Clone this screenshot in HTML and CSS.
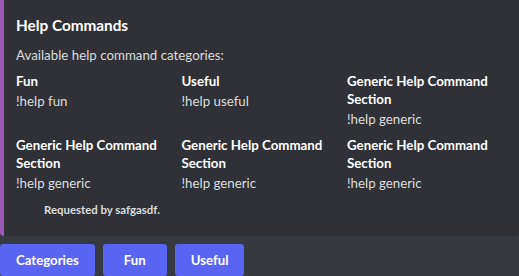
FILE: index.html
```html
<!DOCTYPE html>
<html lang="en">
<head>
<meta charset="utf-8">
<title>Help Commands</title>
<link rel="stylesheet" href="styles.css">
</head>
<body>
<div class="embed">
  <div class="embed-title">Help Commands</div>
  <div class="embed-desc">Available help command categories:</div>
  <div class="fields">
    <div class="field"><div class="field-name">Fun</div><div class="field-value">!help fun</div></div>
    <div class="field"><div class="field-name">Useful</div><div class="field-value">!help useful</div></div>
    <div class="field"><div class="field-name">Generic Help Command Section</div><div class="field-value">!help generic</div></div>
    <div class="field"><div class="field-name">Generic Help Command Section</div><div class="field-value">!help generic</div></div>
    <div class="field"><div class="field-name">Generic Help Command Section</div><div class="field-value">!help generic</div></div>
    <div class="field"><div class="field-name">Generic Help Command Section</div><div class="field-value">!help generic</div></div>
  </div>
  <div class="footer"><span class="footer-icon"></span><span class="footer-text">Requested by safgasdf.</span></div>
</div>
<div class="buttons">
  <button class="btn">Categories</button>
  <button class="btn">Fun</button>
  <button class="btn">Useful</button>
</div>
</body>
</html>
```

FILE: styles.css
```css
html, body {
  margin: 0;
  padding: 0;
  background: #36393f;
  font-family: Lato, "Noto Sans", sans-serif;
  color: #dcddde;
}
.embed {
  background: #2f3136;
  border-left: 4px solid #9b59b6;
  border-radius: 0 0 4px 4px;
  padding: 14px 16px 16px 12px;
}
.embed-title {
  font-size: 15.3px;
  line-height: 22px;
  font-weight: 700;
  color: #ffffff;
}
.embed-desc {
  margin-top: 10px;
  font-size: 13.3px;
  line-height: 18px;
}
.fields {
  margin-top: 8px;
  display: grid;
  grid-template-columns: repeat(3, 157.5px);
  column-gap: 8px;
  row-gap: 8px;
}
.field-name {
  font-size: 13.3px;
  line-height: 18px;
  font-weight: 700;
  color: #ffffff;
  margin-bottom: 2px;
}
.field-value {
  font-size: 13.3px;
  line-height: 18px;
}
.footer {
  margin-top: 8px;
  display: flex;
  align-items: center;
  height: 20px;
}
.footer-icon {
  width: 20px;
  height: 20px;
  margin-right: 8px;
}
.footer-text {
  font-size: 11.4px;
  line-height: 16px;
  font-weight: 700;
  color: #dcddde;
}
.buttons {
  display: flex;
  gap: 8px;
  margin-top: 8px;
}
.btn {
  height: 32px;
  min-width: 64px;
  padding: 2px 16px;
  border: none;
  border-radius: 3px;
  background: #5865f2;
  color: #ffffff;
  font-family: Lato, "Noto Sans", sans-serif;
  font-size: 13.2px;
  font-weight: 700;
  line-height: 16px;
}
```
